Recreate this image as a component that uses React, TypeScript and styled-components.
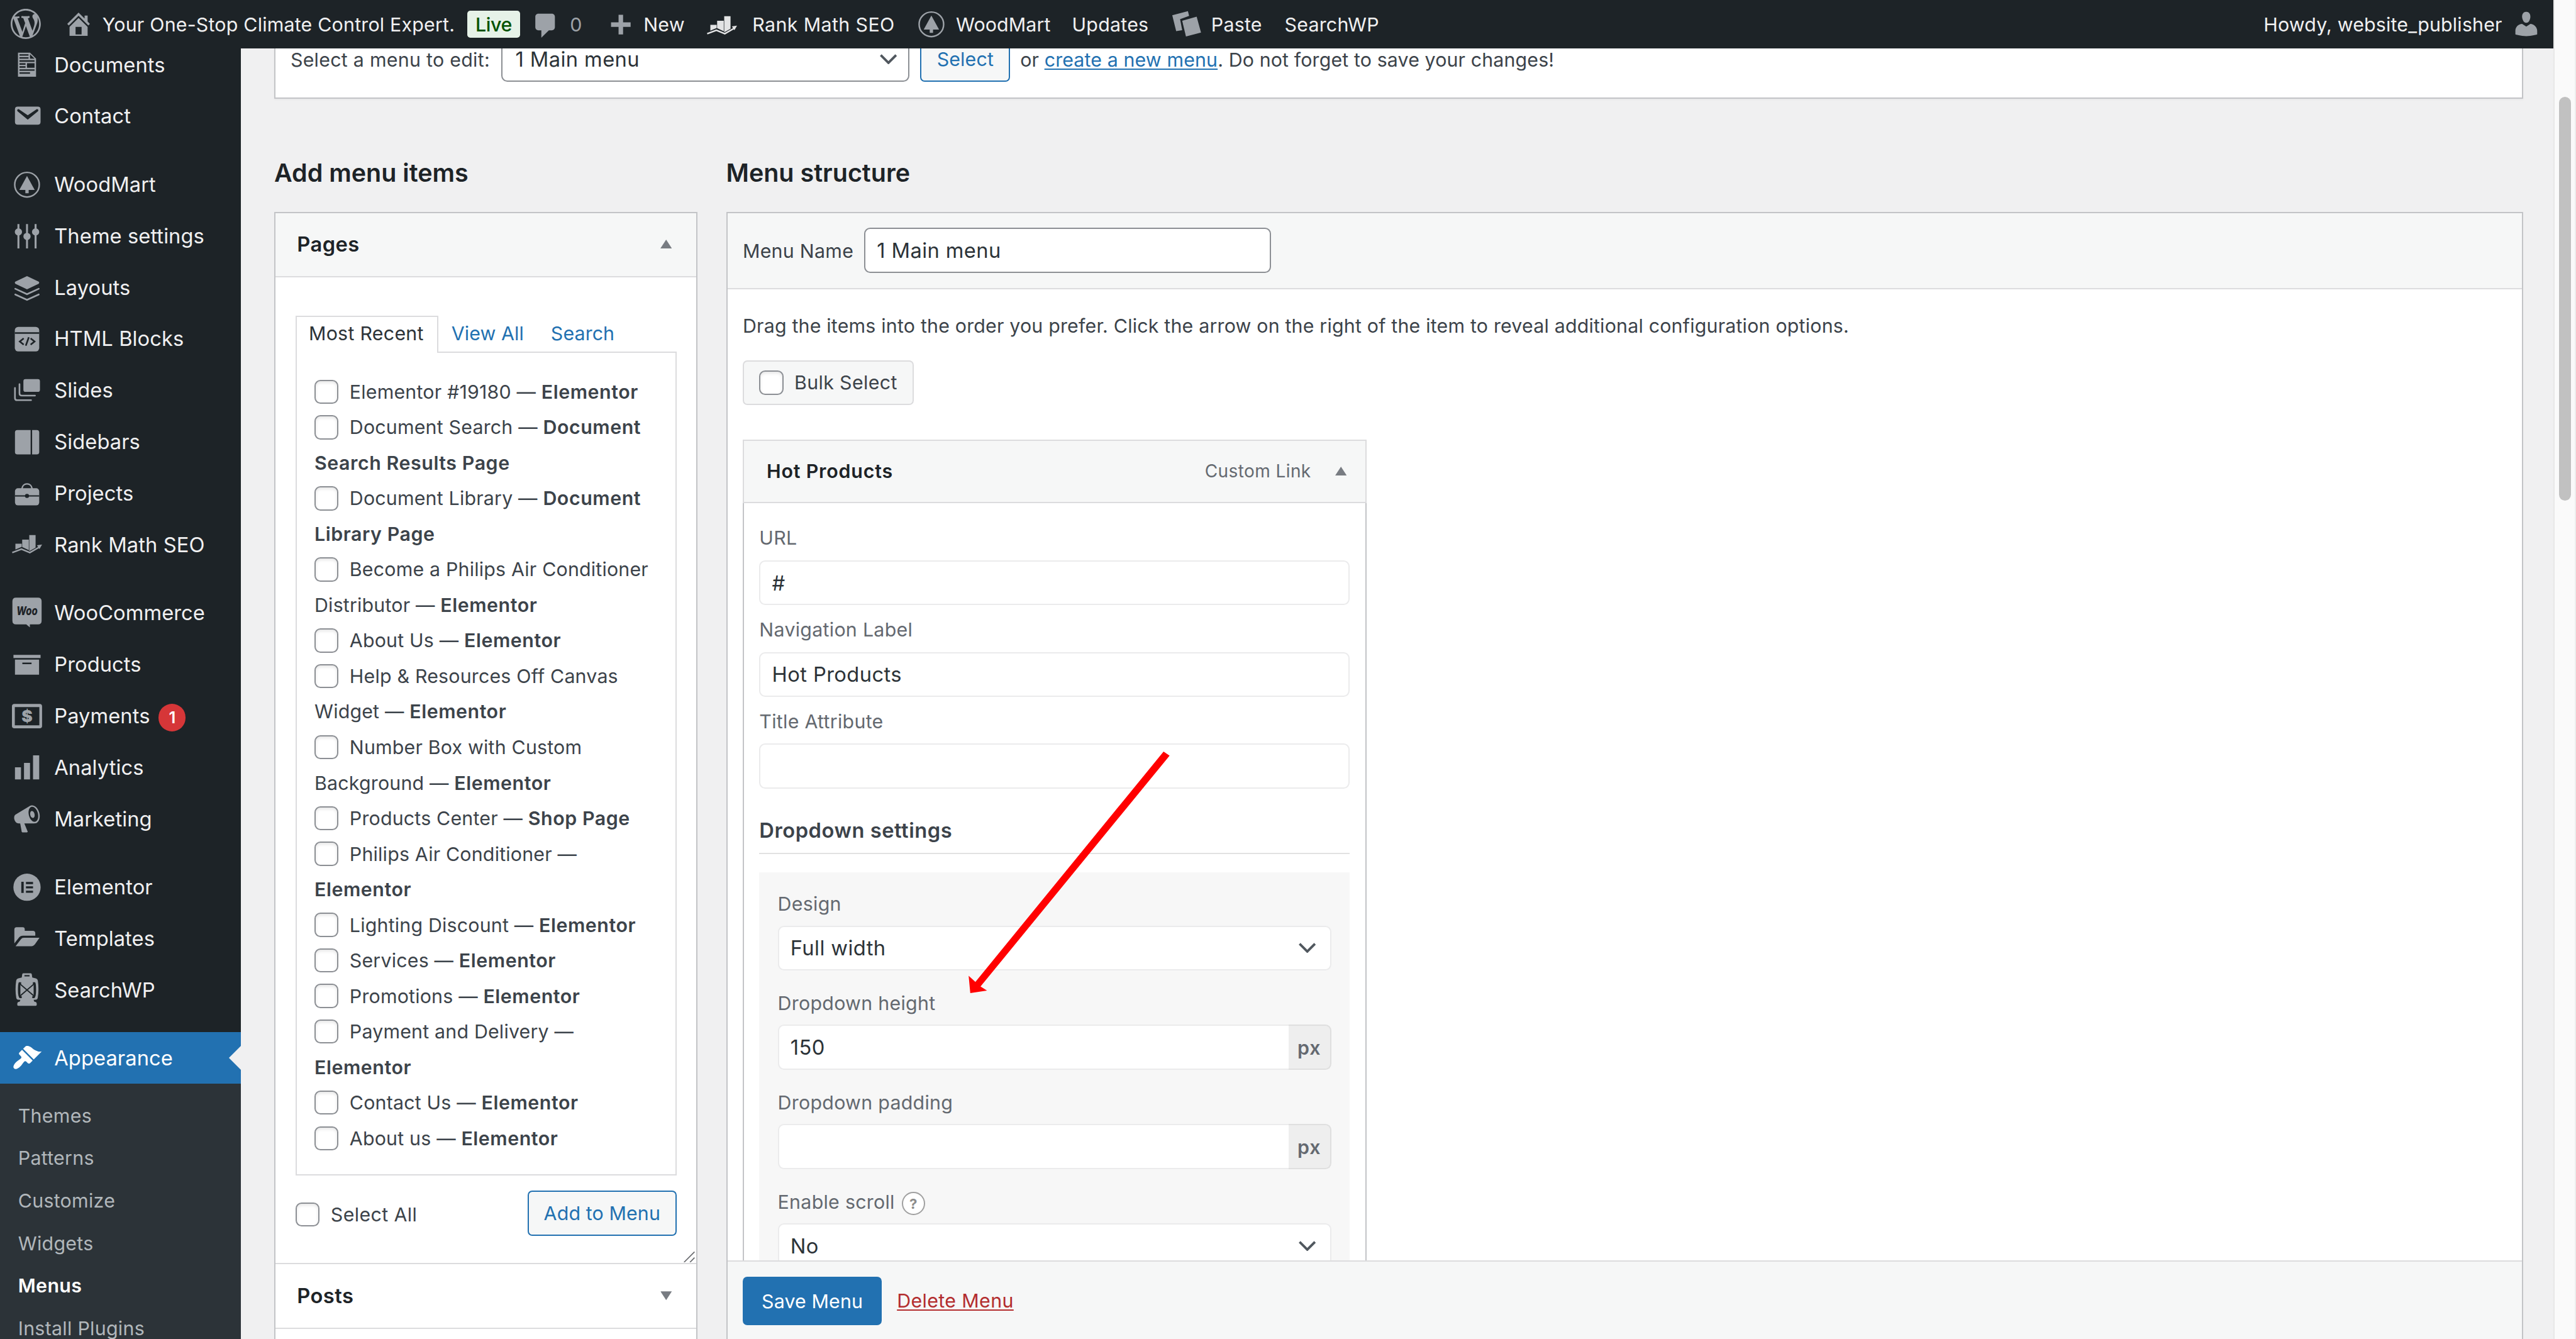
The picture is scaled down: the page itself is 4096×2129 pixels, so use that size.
import React from "react";
import styled, { createGlobalStyle, css } from "styled-components";

/* Every length is given in admin px and multiplied up to the display size. */
const K = 4096 / 1710;
const u = (n: number) => `${(n * K).toFixed(3)}px`;

const type = (size: number, weight = 400, tracking = 0.009) => css`
  font-size: ${u(size * 0.975)};
  font-weight: ${weight};
  letter-spacing: ${tracking}em;
`;

const GlobalStyle = createGlobalStyle`
  * { box-sizing: border-box; margin: 0; padding: 0; }
  html, body { overflow: hidden; }
  body {
    font-family: Inter, "Liberation Sans", sans-serif;
    background: #f0f0f1;
    color: #3c434a;
    white-space: nowrap;
  }
`;

/* ---------- shell ---------- */

const Shell = styled.div`
  position: relative;
  display: flex;
  width: 4096px;
  height: 2129px;
  overflow: hidden;
  background: #f0f0f1;
`;

const Main = styled.div`
  display: flex;
  flex-direction: column;
  flex: 1;
  min-width: 0;
`;

const Body = styled.div`
  display: flex;
  flex: 1;
  min-height: 0;
`;

const ScrollTrack = styled.div`
  width: ${u(15)};
  flex: none;
  padding: ${u(64.4)} ${u(3)} 0 ${u(3)};
  background: #fafafa;
  border-left: ${u(1)} solid #e8e8e8;
  border-right: ${u(1)} solid #ededed;
`;

const ScrollThumb = styled.div`
  width: ${u(8)};
  height: ${u(268)};
  border-radius: ${u(4)};
  background: #c1c1c1;
`;

/* ---------- icons ---------- */

const Glyph = styled.svg`
  display: block;
  flex: none;
  width: ${u(20)};
  height: ${u(20)};
  fill: currentColor;
  overflow: visible;
`;

const DARK = "#1d2327";

type IconName =
  | "wordpress" | "home" | "comment" | "plus" | "rank" | "tree" | "pages" | "user"
  | "document" | "mail" | "sliders" | "layers" | "code" | "slides" | "sidebar" | "portfolio"
  | "woo" | "archive" | "money" | "chart" | "megaphone" | "elementor" | "folder" | "lantern" | "brush";

const shapes: Record<IconName, React.ReactNode> = {
  wordpress: (
    <path d="M20 10c0-5.51-4.49-10-10-10C4.48 0 0 4.49 0 10c0 5.52 4.48 10 10 10 5.51 0 10-4.48 10-10zM7.78 15.37L4.37 6.22c.55-.02 1.17-.08 1.17-.08.5-.06.44-1.13-.06-1.11 0 0-1.45.11-2.37.11-.18 0-.37 0-.58-.01C4.12 2.69 6.87 1.11 10 1.11c2.33 0 4.45.87 6.05 2.34-.68-.11-1.65.39-1.65 1.58 0 .74.45 1.36.9 2.1.35.61.55 1.36.55 2.46 0 1.49-1.4 5-1.4 5l-3.03-8.37c.54-.02.82-.17.82-.17.5-.05.44-1.25-.06-1.22 0 0-1.44.12-2.38.12-.87 0-2.33-.12-2.33-.12-.5-.03-.56 1.2-.06 1.22l.92.08 1.26 3.41zM17.41 10c.24-.64.74-1.87.43-4.25.7 1.29 1.05 2.71 1.05 4.25 0 3.29-1.73 6.24-4.4 7.78.97-2.59 1.94-5.2 2.92-7.78zM6.1 18.09C3.12 16.65 1.11 13.53 1.11 10c0-1.3.23-2.48.72-3.59C3.25 10.3 4.67 14.2 6.1 18.09zm4.03-6.63l2.58 6.98c-.86.29-1.76.45-2.71.45-.79 0-1.57-.11-2.29-.33.81-2.38 1.62-4.74 2.42-7.1z" />
  ),
  home: <path d="M16 8.5l1.53 1.53-1.06 1.06L10 4.6l-6.47 6.49-1.06-1.06L10 2.5l4 4v-2h2v4zm-6-2.46l6 5.99V18H4v-5.97zM12 17v-5H8v5h4z" />,
  comment: <path d="M5 2h9c1.1 0 2 .9 2 2v7c0 1.1-.9 2-2 2h-2l-5 5v-5H5c-1.1 0-2-.9-2-2V4c0-1.1.9-2 2-2z" />,
  plus: <path d="M17 9v3h-5v5H9v-5H4V9h5V4h3v5h5z" />,
  rank: (
    <>
      <path d="M2.3 9.4h4.2v2.1L2.3 13.3z" />
      <path d="M6.8 6.7h4.4v7L6.8 11.6z" />
      <path d="M11.5 3.7h4.2v8.3l-3.9 2.2h-.3z" />
      <path d="M.2 15.3L6.3 13l5.6 2.3 6.2-3.6" fill="none" stroke="currentColor" strokeWidth="1" />
      <path d="M16.6 10.4L20 9.9l-1.7 3z" />
    </>
  ),
  tree: (
    <>
      <circle cx="10" cy="10.3" r="8.15" fill="none" stroke="currentColor" strokeWidth="1" />
      <path d="M10 4.5l5.1 9.3h-4v2.2H8.9v-2.2h-4z" />
    </>
  ),
  pages: (
    <>
      <path d="M.4 4.3L10.8 1.6l.8 3.1-6 2.2 1.4 7.3L3 14.8z" />
      <path d="M7 7.9L16.6 5.2 19.5 15.8 9.5 18.4z" />
    </>
  ),
  user: (
    <path d="M10 9.25c-2.27 0-2.73-3.44-2.73-3.44C7 4.02 7.82 2 9.97 2c2.16 0 2.98 2.02 2.71 3.81 0 0-.41 3.44-2.68 3.44zm0 2.57L12.72 10c2.39 0 4.52 2.33 4.52 4.53v2.49s-3.65 1.13-7.24 1.13c-3.65 0-7.24-1.13-7.24-1.13v-2.49c0-2.25 1.94-4.48 4.47-4.48z" />
  ),
  document: (
    <path d="M12 2l4 4v12H4V2h8zM5 3v1h6V3H5zm7 3h3l-3-3v3zM5 5v1h6V5H5zm10 3V7H5v1h10zM5 9v1h4V9H5zm10 3V9h-5v3h5zM5 11v1h4v-1H5zm10 3v-1H5v1h10zm-3 2v-1H5v1h7z" />
  ),
  mail: (
    <path d="M3.87 4h13.25C18.37 4 19 4.59 19 5.79v8.42c0 1.19-.63 1.79-1.88 1.79H3.87c-1.25 0-1.88-.6-1.88-1.79V5.79c0-1.2.63-1.79 1.88-1.79zm6.62 8.6l6.74-5.53c.24-.2.43-.66.13-1.07-.29-.41-.82-.42-1.17-.17l-5.7 3.86L4.8 5.83c-.35-.25-.88-.24-1.17.17-.3.41-.11.87.13 1.07z" />
  ),
  sliders: (
    <>
      <path d="M4.3 2.2v16.2M10 2.2v16.2M15.7 2.2v16.2" stroke="currentColor" strokeWidth="1.3" />
      <circle cx="4.3" cy="7.4" r="2.4" />
      <circle cx="10" cy="10.4" r="2.4" />
      <circle cx="15.7" cy="7.4" r="2.4" />
    </>
  ),
  layers: (
    <>
      <path d="M10 2.5l7.7 3.7q.8.7 0 1.4L10 11.3 2.3 7.6q-.8-.7 0-1.4z" />
      <path d="M2.2 10.9L10 14.5l7.8-3.6M2.2 14.7L10 18.3l7.8-3.6" fill="none" stroke="currentColor" strokeWidth="1.1" strokeLinecap="round" />
    </>
  ),
  code: (
    <>
      <rect x="1.9" y="2.4" width="16.2" height="16.3" rx="2.3" />
      <path d="M1.9 6.5h16.2" stroke={DARK} strokeWidth="1" />
      <path d="M7.8 10L5.2 12.1l2.6 2.1M12.4 10l2.6 2.1-2.6 2.1M11.2 9.3l-2 5.6" fill="none" stroke={DARK} strokeWidth="1.1" />
    </>
  ),
  slides: (
    <>
      <rect x="7.6" y="2.8" width="11" height="8.5" rx="1.4" />
      <path d="M5 6.2v6q0 1.6 1.6 1.6h8.7M2 8.7v6.7q0 1.4 1.4 1.4h9.3" fill="none" stroke="currentColor" strokeWidth="1.1" strokeLinecap="round" />
    </>
  ),
  sidebar: (
    <>
      <path d="M3.6 2.4h8.8v16.2H3.6q-1.6 0-1.6-1.6V4q0-1.6 1.6-1.6z" />
      <path d="M13.4 2.4h3.1q1.6 0 1.6 1.6v13q0 1.6-1.6 1.6h-3.1z" />
    </>
  ),
  portfolio: (
    <>
      <path d="M6.6 7.2C7.1 2.8 12.9 2.8 13.4 7.2" fill="none" stroke="currentColor" strokeWidth="1" />
      <rect x="2" y="6.8" width="16.1" height="11.4" rx="2" />
      <path d="M2 11.9h16.1" stroke={DARK} strokeWidth=".9" />
      <circle cx="10" cy="11.9" r="1.35" fill={DARK} />
    </>
  ),
  woo: (
    <>
      <path d="M2.7.1h14.6q2.4 0 2.4 2.4v13q0 2.4-2.4 2.4h-5.4v1.9l-2.4-1.9H2.7Q.3 17.9.3 15.5v-13Q.3.1 2.7.1z" />
      <text x="10" y="11.8" fontSize="8" fontWeight="800" fontStyle="italic" textAnchor="middle" textLength="14" lengthAdjust="spacingAndGlyphs" fill={DARK}>Woo</text>
    </>
  ),
  archive: (
    <>
      <path d="M1 3.9h18v2H1z" />
      <path d="M2 7h16v10H2zM6.9 9v1H13V9z" fillRule="evenodd" />
    </>
  ),
  money: (
    <>
      <path d="M1.6 2.2h16.8q1.6 0 1.6 1.6v13q0 1.6-1.6 1.6H1.6Q0 18.4 0 16.8v-13q0-1.6 1.6-1.6zM1.9 4.3v12.1h16.3V4.3z" fillRule="evenodd" />
      <text x="10" y="14.4" fontSize="11" fontWeight="900" textAnchor="middle">$</text>
    </>
  ),
  chart: <path d="M2 10h4v8.1H2zM8 7.1h4v11H8zM14 2.1h4.1v16H14z" />,
  megaphone: (
    <path d="M18.15 5.94c.46 1.62.38 3.22-.02 4.48-.42 1.28-1.26 2.18-2.3 2.48-.16.06-.26.06-.4.06-.06.02-.12.02-.18.02-.06.02-.14.02-.22.02h-6.8l2.22 5.5c.02.14-.06.26-.14.34-.08.1-.24.16-.34.16H6.95c-.1 0-.26-.06-.34-.16-.08-.08-.16-.2-.14-.34l-1-5.5H4.25l-.02-.02c-.5.06-1.08-.18-1.54-.62s-.88-1.08-1.06-1.88c-.24-.8-.2-1.56-.02-2.2.18-.62.58-1.08 1.06-1.3l.02-.02 9-5.4c.1-.06.18-.1.24-.16.06-.04.14-.08.24-.12.16-.08.28-.12.5-.18 1.04-.3 2.24.1 3.22.98s1.84 2.24 2.26 3.86zm-2.58 5.98h-.02c.4-.1.74-.34 1.04-.7.58-.7.86-1.76.86-3.04 0-.64-.1-1.3-.28-1.98-.34-1.36-1.02-2.5-1.78-3.24s-1.68-1.1-2.46-.88c-.82.22-1.4.96-1.7 2-.32 1.04-.28 2.36.06 3.72.38 1.36 1 2.5 1.8 3.24.78.74 1.62 1.1 2.48.88zm-2.54-7.08c.22-.04.42-.02.62.04.38.16.76.48 1.02 1s.42 1.2.42 1.78c0 .3-.04.56-.12.8-.18.48-.44.84-.86.94-.34.1-.8-.06-1.14-.4s-.64-.86-.78-1.5c-.18-.62-.12-1.24.02-1.72s.48-.84.82-.94z" />
  ),
  elementor: (
    <>
      <circle cx="10" cy="10.3" r="9.05" />
      <path d="M6.2 6.7h1.6v7.4H6.2zM9.3 6.8H14v1.4H9.3zM9.3 9.7H14v1.4H9.3zM9.3 12.6H14V14H9.3z" fill={DARK} />
    </>
  ),
  folder: (
    <>
      <path d="M1.6 13.4V4.1q0-1.5 1.5-1.5h4q1.4 0 1.4 1.4v1h5.4q1.6 0 1.6 1.6v1.7H7.2q-1.4 0-2.3.9z" />
      <path d="M2.4 15.2l3.6-4.7q.7-.9 1.9-.9h10.4l-3 4.3q-.9 1.3-2.4 1.3z" />
    </>
  ),
  lantern: (
    <>
      <path d="M7.500-1h5q.6 0 .7.8l.3 2 2.500.6q1 .3 1.200 1.500.9 6-.1 11.600-.2 1-1.100 1l-1.600.1.4 1.200 1.100.3q.6.4.6 1.400 0 1.100-.7 1.100H4.200q-.7 0-.7-1.100 0-1 .6-1.400l1.100-.3.4-1.200-1.600-.1q-.9 0-1.100-1-1-5.600-.1-11.600.2-1.200 1.200-1.500l2.500-.6.3-2q.1-.8.7-.8z" />
      <path d="M8.300.6h3.400" stroke={DARK} strokeWidth=".9" />
      <path d="M4.600 4.900h1.500v1.300h-.5v8h.9v1.200H5.200Q4 14.800 4 10.200t.6-5.300zM15.400 4.900h-1.500v1.300h.5v8h-.9v1.200h1.300Q16 14.800 16 10.200t-.6-5.300z" fill={DARK} />
      <path d="M5.300 6l9.400 8.100M14.700 6l-9.400 8.100" stroke={DARK} strokeWidth=".8" />
    </>
  ),
  brush: (
    <path d="M14.480 11.060L7.410 3.990l1.500-1.500c.5-.56 2.300-.47 3.510.32 1.210.8 1.430 1.280 2.910 2.100 1.180.64 2.450 1.260 4.450.85zm-.71.71L6.700 4.700 4.930 6.470c-.39.39-.39 1.020 0 1.410l1.060 1.060c.39.39.39 1.030 0 1.420-.6.6-1.430 1.110-2.210 1.690-.35.26-.7.53-1.010.84C1.430 14.230.4 16.080 1.400 17.070c.99 1 2.840-.03 4.180-1.360.31-.31.58-.66.85-1.020.57-.78 1.080-1.610 1.690-2.210.39-.39 1.020-.39 1.410 0l1.060 1.060c.39.39 1.020.39 1.410 0z" />
  ),
};

const Icon = ({ name }: { name: IconName }) => <Glyph viewBox="0 0 20 20">{shapes[name]}</Glyph>;

const Arrowhead = styled.svg`
  display: block;
  flex: none;
  width: ${u(11.4)};
  height: ${u(6.8)};
  fill: none;
  stroke: #50575e;
`;
const Chevron = () => (
  <Arrowhead viewBox="0 0 11.4 6.8"><path d="M.6.7l5.1 5.100L10.800.7" strokeWidth="1.600" /></Arrowhead>
);

const Triangle = styled.svg<{ $down?: boolean }>`
  display: block;
  flex: none;
  width: ${u(7.7)};
  height: ${u(5.9)};
  fill: #787c82;
  transform: ${(p) => (p.$down ? "rotate(180deg)" : "none")};
`;
const Toggle = ({ down }: { down?: boolean }) => (
  <Triangle $down={down} viewBox="0 0 10 8" preserveAspectRatio="none"><path d="M5 0l5 8H0z" /></Triangle>
);

/* ---------- admin bar ---------- */

const Bar = styled.header`
  position: relative;
  z-index: 2;
  display: flex;
  flex: none;
  height: ${u(32)};
  background: #1d2327;
  color: #f0f0f1;
`;

const BarItem = styled.div<{ $w?: number; $gap?: number }>`
  display: flex;
  flex: none;
  align-items: flex-start;
  gap: ${(p) => u(p.$gap ?? 6)};
  width: ${(p) => (p.$w ? u(p.$w) : "auto")};
  padding-left: ${u(7)};
`;

const BarIcon = styled.span<{ $top?: number; $bright?: boolean }>`
  padding-top: ${(p) => u(p.$top ?? 6)};
  color: ${(p) => (p.$bright ? "#e3e4e5" : "#9da2a8")};
`;

const BarText = styled.span<{ $dim?: boolean; $tracking?: number }>`
  ${(p) => type(13, 400, p.$tracking ?? 0.008)}
  line-height: ${u(33)};
  color: ${(p) => (p.$dim ? "#9da2a8" : "inherit")};
`;

const LiveBadge = styled.span`
  ${type(13, 500, -0.012)}
  margin: ${u(6.9)} 0 0 ${u(2.2)};
  width: ${u(35.6)};
  height: ${u(18.2)};
  line-height: ${u(18.6)};
  text-align: center;
  border-radius: ${u(2)};
  background: #e6f2e8;
  color: #005200;
`;

const Account = styled(BarItem)`
  margin-left: auto;
  padding-right: ${u(8)};
`;

/* ---------- sidebar ---------- */

const Sidebar = styled.nav`
  width: ${u(160)};
  flex: none;
  overflow: hidden;
  background: #1d2327;
`;

const SidebarScroll = styled.div`
  margin-top: ${u(-6.2)};
`;

const NavRow = styled.div<{ $current?: boolean }>`
  position: relative;
  display: flex;
  align-items: flex-start;
  height: ${u(34.2)};
  padding: ${u(7)} 0 0 ${u(8)};
  gap: ${u(8)};
  background: ${(p) => (p.$current ? "#2271b1" : "transparent")};
  color: ${(p) => (p.$current ? "#fff" : "#9da2a8")};
`;

const NavLabel = styled.span<{ $current?: boolean }>`
  ${type(14, 400, 0.002)}
  line-height: ${u(20.6)};
  color: ${(p) => (p.$current ? "#fff" : "#f0f0f1")};
`;

const Separator = styled.div`
  height: ${u(11)};
`;

const Bubble = styled.span`
  ${type(11, 600, 0)}
  margin: ${u(2.2)} 0 0 ${u(-2.2)};
  width: ${u(18)};
  height: ${u(18)};
  line-height: ${u(18)};
  border-radius: 50%;
  text-align: center;
  background: #d63638;
  color: #fff;
`;

const CurrentNotch = styled.span`
  position: absolute;
  right: 0;
  top: ${u(9)};
  border-style: solid;
  border-width: ${u(8)} ${u(8)} ${u(8)} 0;
  border-color: transparent #f0f0f1 transparent transparent;
`;

const Submenu = styled.div`
  padding: ${u(7.3)} 0 ${u(20)} ${u(12)};
  background: #2c3338;
`;

const SubLink = styled.div<{ $active?: boolean }>`
  ${(p) => type(13, p.$active ? 600 : 400, p.$active ? 0.012 : 0.009)}
  height: ${u(28.2)};
  line-height: ${u(28.2)};
  color: ${(p) => (p.$active ? "#fff" : "#b1b7bb")};
`;

/* ---------- shared controls ---------- */

const Page = styled.main`
  flex: 1;
  min-width: 0;
  padding: 0 ${u(20)} 0 ${u(22)};
  overflow: hidden;
`;

const Checkbox = styled.span`
  flex: none;
  width: ${u(16)};
  height: ${u(16)};
  border: ${u(1)} solid #8c8f94;
  border-radius: ${u(4)};
  background: #fff;
  box-shadow: inset 0 ${u(1)} ${u(2)} rgba(0, 0, 0, 0.1);
`;

const Input = styled.div<{ $w?: number; $soft?: boolean }>`
  ${type(14, 400, 0.012)}
  display: flex;
  align-items: center;
  justify-content: space-between;
  width: ${(p) => (p.$w ? u(p.$w) : "auto")};
  height: ${u(29.8)};
  padding-left: ${u(7.6)};
  border: ${u(1)} solid ${(p) => (p.$soft ? "#ebebec" : "#8c8f94")};
  border-radius: ${u(4)};
  background: #fff;
  color: #2c3338;
`;

const Select = styled(Input)`
  padding-right: ${(p) => u(p.$soft ? 9.4 : 7.3)};
  padding-left: ${(p) => u(p.$soft ? 7.6 : 8.6)};
`;

const Button = styled.div<{ $w: number; $primary?: boolean }>`
  ${(p) => type(13, 400, p.$primary ? 0.005 : 0.004)}
  display: flex;
  align-items: center;
  justify-content: center;
  flex: none;
  width: ${(p) => u(p.$w)};
  height: ${(p) => u(p.$primary ? 32 : 30)};
  border: ${u(1)} solid #2271b1;
  border-radius: ${u(3)};
  background: ${(p) => (p.$primary ? "#2271b1" : "#f6f7f7")};
  color: ${(p) => (p.$primary ? "#fff" : "#2271b1")};
`;

/* ---------- menu chooser ---------- */

const Chooser = styled.section`
  display: flow-root;
  height: ${u(33.4)};
  padding-left: ${u(10)};
  border: ${u(1)} solid #c3c4c7;
  border-top: 0;
  background: #fff;
  box-shadow: 0 ${u(1)} ${u(1)} rgba(0, 0, 0, 0.04);
`;

const ChooserRow = styled.div`
  ${type(13)}
  display: flex;
  align-items: center;
  height: ${u(30)};
  margin-top: ${u(-7.7)};
`;

const ChooserLabel = styled.span`
  width: ${u(139.9)};
  padding-top: ${u(1)};
`;

const ChooserHint = styled.span`
  ${type(13, 400, 0.004)}
  padding: ${u(1)} 0 0 ${u(6.6)};
`;

const Link = styled.a<{ $danger?: boolean }>`
  color: ${(p) => (p.$danger ? "#b32d2e" : "#2271b1")};
  text-decoration: underline;
  text-decoration-thickness: ${u(1)};
  text-underline-offset: ${u(1.4)};
`;

const Spacer = styled.span<{ $w: number }>`
  flex: none;
  width: ${(p) => u(p.$w)};
`;

/* ---------- columns ---------- */

const Columns = styled.div`
  display: grid;
  grid-template-columns: ${u(281)} 1fr;
  column-gap: ${u(19)};
  margin-top: ${u(37.8)};
`;

const Heading = styled.h2`
  ${type(16.9, 600, 0)}
  line-height: ${u(23.7)};
  margin-bottom: ${u(13.6)};
  color: #1d2327;
`;

const Accordion = styled.div`
  height: ${u(760)};
  border: ${u(1)} solid #c3c4c7;
  background: #fff;
`;

const AccordionHead = styled.div<{ $open?: boolean }>`
  ${type(14, 600, 0.014)}
  display: flex;
  align-items: center;
  justify-content: space-between;
  height: ${u(43)};
  padding: 0 ${u(16.3)} ${u(0.8)} ${u(14.3)};
  border-bottom: ${u(1)} solid #dcdcde;
  background: ${(p) => (p.$open ? "#f6f7f7" : "#fff")};
  color: #1d2327;
`;

const AccordionBody = styled.div`
  position: relative;
  height: ${u(654.9)};
  padding: ${u(25.4)} ${u(13.1)} 0 ${u(13.3)};
  border-bottom: ${u(1)} solid #dcdcde;
`;

const Tabs = styled.div`
  position: relative;
  z-index: 1;
  display: flex;
  height: ${u(24.5)};
  margin-bottom: ${u(-1)};
`;

const Tab = styled.div<{ $active?: boolean; $w?: number }>`
  ${(p) => type(13, 400, p.$active ? 0.009 : 0.003)}
  width: ${(p) => (p.$w ? u(p.$w) : "auto")};
  padding-left: ${(p) => u(p.$active ? 8 : 8)};
  line-height: ${u(22.4)};
  border: ${u(1)} solid ${(p) => (p.$active ? "#dcdcde" : "transparent")};
  border-bottom: 0;
  background: ${(p) => (p.$active ? "#fff" : "transparent")};
  color: ${(p) => (p.$active ? "#2c3338" : "#2271b1")};
`;

const PageList = styled.div`
  height: ${u(547)};
  padding: ${u(14.2)} 0 0 ${u(11.8)};
  border: ${u(1)} solid #dcdcde;
`;

const PageLine = styled.div`
  ${type(13, 400, 0.006)}
  display: flex;
  align-items: center;
  gap: ${u(7.3)};
  height: ${u(23.595)};

  b {
    font-weight: 600;
    letter-spacing: 0.018em;
  }
`;

const ListActions = styled.div`
  display: flex;
  justify-content: space-between;
  align-items: center;
  margin-top: ${u(10.1)};
`;

const CheckLabel = styled.label`
  ${type(13, 400, 0.012)}
  display: flex;
  align-items: center;
  gap: ${u(7.4)};
  padding-top: ${u(2)};
`;

const ResizeGrip = styled.svg`
  position: absolute;
  right: ${u(1)};
  bottom: ${u(0.3)};
  width: ${u(7.4)};
  height: ${u(7.4)};
  stroke: #6a6c70;
  fill: none;
`;

/* ---------- menu editor ---------- */

const Editor = styled.div`
  display: flex;
  flex-direction: column;
  height: ${u(749.9)};
  border: ${u(1)} solid #c3c4c7;
  border-bottom: 0;
  background: #fff;
`;

const EditorHead = styled.div`
  ${type(13)}
  display: flex;
  align-items: center;
  flex: none;
  height: ${u(50.7)};
  padding: 0 0 ${u(0.2)} ${u(10.2)};
  border-bottom: ${u(1)} solid #dcdcde;
  background: #f6f7f7;
`;

const NameLabel = styled.span`
  width: ${u(80.6)};
  padding-top: ${u(0.6)};
`;

const EditorBody = styled.div`
  flex: 1;
  min-height: 0;
  overflow: hidden;
  padding: ${u(14.8)} ${u(10)} 0 ${u(10.2)};
`;

const Instructions = styled.p`
  ${type(13, 400, 0.0062)}
  line-height: ${u(19.5)};
`;

const BulkSelect = styled.div`
  ${type(13, 400, 0.012)}
  display: flex;
  align-items: center;
  gap: ${u(7.2)};
  width: ${u(113.4)};
  height: ${u(29.8)};
  margin-top: ${u(12.8)};
  padding-left: ${u(10.2)};
  border: ${u(1)} solid #dcdcde;
  border-radius: ${u(3)};
  background: #f6f7f7;
`;

const MenuItem = styled.article`
  width: ${u(414)};
  margin-top: ${u(22.8)};
`;

const MenuItemHead = styled.div`
  display: flex;
  align-items: center;
  height: ${u(42.3)};
  padding: 0 ${u(12.2)} 0 ${u(15.1)};
  border: ${u(1)} solid #dcdcde;
  background: #f6f7f7;
`;

const MenuItemTitle = styled.span`
  ${type(13, 600, 0.026)}
  flex: 1;
  color: #1d2327;
`;

const MenuItemKind = styled.span`
  ${type(12, 400, 0.0145)}
  margin-right: ${u(16)};
  color: #646970;
`;

const Settings = styled.div`
  height: ${u(600)};
  padding: ${u(13.4)} ${u(10.2)} 0;
  border: solid #c3c4c7;
  border-width: 0 ${u(1)};
`;

const Field = styled.div<{ $compact?: boolean }>`
  margin-bottom: ${(p) => u(p.$compact ? 11.9 : 6.4)};
`;

const FieldLabel = styled.div<{ $compact?: boolean }>`
  ${type(13, 400, 0.009)}
  display: flex;
  align-items: center;
  height: ${u(19.5)};
  margin-bottom: ${(p) => u(p.$compact ? 4.7 : 5.1)};
  color: #646970;
`;

const SectionTitle = styled.h4`
  ${type(14, 600, 0.016)}
  line-height: ${u(20)};
  margin: ${u(18.3)} 0 ${u(12.1)};
  padding-bottom: ${u(4.3)};
  border-bottom: ${u(1)} solid #e2e2e2;
  color: #3c434a;
`;

const DropdownBox = styled.div`
  height: ${u(320)};
  padding: ${u(11.3)} ${u(12.2)} 0;
  background: #f7f7f7;
`;

const UnitInput = styled.div`
  display: grid;
  grid-template-columns: 1fr ${u(28.5)};

  > :first-child {
    border-right: 0;
    border-radius: ${u(4)} 0 0 ${u(4)};
  }
`;

const Unit = styled.span`
  ${type(13, 600, 0.03)}
  display: flex;
  align-items: center;
  justify-content: center;
  border: ${u(1)} solid #dfdfdf;
  border-left: 0;
  border-radius: 0 ${u(4)} ${u(4)} 0;
  padding-top: ${u(1)};
  background: #eee;
  color: #646970;
`;

const Help = styled.span`
  ${type(9.5, 700, 0)}
  display: flex;
  align-items: center;
  justify-content: center;
  width: ${u(15.4)};
  height: ${u(15.4)};
  margin: ${u(2.6)} 0 0 ${u(4.6)};
  border: ${u(1)} solid #a0a0a0;
  border-radius: 50%;
  background: #fff;
  color: #8c8c8c;
`;

const EditorFoot = styled.div`
  display: flex;
  flex: none;
  gap: ${u(10)};
  height: ${u(53.9)};
  padding: ${u(10.3)} ${u(10.2)} 0;
  border-top: ${u(1)} solid #dcdcde;
  background: #f6f7f7;
`;

const DeleteText = styled.span`
  ${type(13, 400, 0.012)}
  line-height: ${u(32.4)};
`;

const Annotation = styled.svg`
  position: absolute;
  inset: 0;
  width: 100%;
  height: 100%;
  z-index: 3;
  pointer-events: none;
`;

/* ---------- data ---------- */

type NavEntry = { icon: IconName; label: string; badge?: string } | null;

const nav: NavEntry[] = [
  { icon: "document", label: "Documents" },
  { icon: "mail", label: "Contact" },
  null,
  { icon: "tree", label: "WoodMart" },
  { icon: "sliders", label: "Theme settings" },
  { icon: "layers", label: "Layouts" },
  { icon: "code", label: "HTML Blocks" },
  { icon: "slides", label: "Slides" },
  { icon: "sidebar", label: "Sidebars" },
  { icon: "portfolio", label: "Projects" },
  { icon: "rank", label: "Rank Math SEO" },
  null,
  { icon: "woo", label: "WooCommerce" },
  { icon: "archive", label: "Products" },
  { icon: "money", label: "Payments", badge: "1" },
  { icon: "chart", label: "Analytics" },
  { icon: "megaphone", label: "Marketing" },
  null,
  { icon: "elementor", label: "Elementor" },
  { icon: "folder", label: "Templates" },
  { icon: "lantern", label: "SearchWP" },
  null,
];

const submenu = ["Themes", "Patterns", "Customize", "Widgets", "Menus", "Install Plugins"];

/* [has checkbox, regular text, bold text] for each printed line */
const lines: [boolean, string, string][] = [
  [true, "Elementor #19180 — ", "Elementor"],
  [true, "Document Search — ", "Document"],
  [false, "", "Search Results Page"],
  [true, "Document Library — ", "Document"],
  [false, "", "Library Page"],
  [true, "Become a Philips Air Conditioner", ""],
  [false, "Distributor — ", "Elementor"],
  [true, "About Us — ", "Elementor"],
  [true, "Help & Resources Off Canvas", ""],
  [false, "Widget — ", "Elementor"],
  [true, "Number Box with Custom", ""],
  [false, "Background — ", "Elementor"],
  [true, "Products Center — ", "Shop Page"],
  [true, "Philips Air Conditioner —", ""],
  [false, "", "Elementor"],
  [true, "Lighting Discount — ", "Elementor"],
  [true, "Services — ", "Elementor"],
  [true, "Promotions — ", "Elementor"],
  [true, "Payment and Delivery —", ""],
  [false, "", "Elementor"],
  [true, "Contact Us — ", "Elementor"],
  [true, "About us — ", "Elementor"],
];

/* ---------- sections ---------- */

const AdminBar = () => (
  <Bar>
    <BarItem $w={35}><BarIcon><Icon name="wordpress" /></BarIcon></BarItem>
    <BarItem $w={310.4}>
      <BarIcon><Icon name="home" /></BarIcon>
      <BarText $tracking={0.0065}>Your One-Stop Climate Control Expert.</BarText>
      <LiveBadge>Live</LiveBadge>
    </BarItem>
    <BarItem $w={49.1}><BarIcon $top={7}><Icon name="comment" /></BarIcon><BarText $dim>0</BarText></BarItem>
    <BarItem $w={67.9} $gap={5.7}><BarIcon><Icon name="plus" /></BarIcon><BarText>New</BarText></BarItem>
    <BarItem $w={138.7} $gap={10}><BarIcon $top={7.2} $bright><Icon name="rank" /></BarIcon><BarText $tracking={0.013}>Rank Math SEO</BarText></BarItem>
    <BarItem $w={103.5} $gap={6.5}><BarIcon $top={5.7}><Icon name="tree" /></BarIcon><BarText $tracking={0.003}>WoodMart</BarText></BarItem>
    <BarItem $w={66.2}><BarText>Updates</BarText></BarItem>
    <BarItem $w={74.9} $gap={6.2}><BarIcon><Icon name="pages" /></BarIcon><BarText>Paste</BarText></BarItem>
    <BarItem><BarText>SearchWP</BarText></BarItem>
    <Account><BarText $tracking={0.0055}>Howdy, website_publisher</BarText><BarIcon><Icon name="user" /></BarIcon></Account>
  </Bar>
);

const AdminMenu = () => (
  <Sidebar>
    <SidebarScroll>
      {nav.map((n, i) =>
        n ? (
          <NavRow key={i}>
            <Icon name={n.icon} />
            <NavLabel>{n.label}</NavLabel>
            {n.badge && <Bubble>{n.badge}</Bubble>}
          </NavRow>
        ) : (
          <Separator key={i} />
        )
      )}
      <NavRow $current>
        <Icon name="brush" />
        <NavLabel $current>Appearance</NavLabel>
        <CurrentNotch />
      </NavRow>
      <Submenu>
        {submenu.map((s) => <SubLink key={s} $active={s === "Menus"}>{s}</SubLink>)}
      </Submenu>
    </SidebarScroll>
  </Sidebar>
);

const AddItems = () => (
  <section>
    <Heading>Add menu items</Heading>
    <Accordion>
      <AccordionHead $open>Pages<Toggle /></AccordionHead>
      <AccordionBody>
        <Tabs>
          <Tab $active $w={94.7}>Most Recent</Tab>
          <Tab $w={66}>View All</Tab>
          <Tab>Search</Tab>
        </Tabs>
        <PageList>
          {lines.map(([box, text, bold], i) => (
            <PageLine key={i}>
              {box && <Checkbox />}
              <span>{text}{bold && <b>{bold}</b>}</span>
            </PageLine>
          ))}
        </PageList>
        <ListActions>
          <CheckLabel><Checkbox />Select All</CheckLabel>
          <Button $w={98.8}>Add to Menu</Button>
        </ListActions>
        <ResizeGrip viewBox="0 0 10 10"><path d="M.4 9.6L9.800.2M5.7 9.6L9.800 5.5" strokeWidth="1" /></ResizeGrip>
      </AccordionBody>
      <AccordionHead>Posts<Toggle down /></AccordionHead>
    </Accordion>
  </section>
);

const MenuStructure = () => (
  <section>
    <Heading>Menu structure</Heading>
    <Editor>
      <EditorHead>
        <NameLabel>Menu Name</NameLabel>
        <Input $w={270}>1 Main menu</Input>
      </EditorHead>
      <EditorBody>
        <Instructions>
          Drag the items into the order you prefer. Click the arrow on the right of the item to reveal additional configuration options.
        </Instructions>
        <BulkSelect><Checkbox />Bulk Select</BulkSelect>
        <MenuItem>
          <MenuItemHead>
            <MenuItemTitle>Hot Products</MenuItemTitle>
            <MenuItemKind>Custom Link</MenuItemKind>
            <Toggle />
          </MenuItemHead>
          <Settings>
            <Field><FieldLabel>URL</FieldLabel><Input $soft>#</Input></Field>
            <Field><FieldLabel>Navigation Label</FieldLabel><Input $soft>Hot Products</Input></Field>
            <Field><FieldLabel>Title Attribute</FieldLabel><Input $soft /></Field>
            <SectionTitle>Dropdown settings</SectionTitle>
            <DropdownBox>
              <Field $compact>
                <FieldLabel $compact>Design</FieldLabel>
                <Select $soft>Full width<Chevron /></Select>
              </Field>
              <Field $compact>
                <FieldLabel $compact>Dropdown height</FieldLabel>
                <UnitInput><Input $soft>150</Input><Unit>px</Unit></UnitInput>
              </Field>
              <Field $compact>
                <FieldLabel $compact>Dropdown padding</FieldLabel>
                <UnitInput><Input $soft /><Unit>px</Unit></UnitInput>
              </Field>
              <Field $compact>
                <FieldLabel $compact>Enable scroll<Help>?</Help></FieldLabel>
                <Select $soft>No<Chevron /></Select>
              </Field>
            </DropdownBox>
          </Settings>
        </MenuItem>
      </EditorBody>
      <EditorFoot>
        <Button $primary $w={92.4}>Save Menu</Button>
        <DeleteText><Link $danger>Delete Menu</Link></DeleteText>
      </EditorFoot>
    </Editor>
  </section>
);

export default function App() {
  return (
    <>
      <GlobalStyle />
      <Shell>
        <Main>
          <AdminBar />
          <Body>
            <AdminMenu />
            <Page>
              <Chooser>
                <ChooserRow>
                  <ChooserLabel>Select a menu to edit:</ChooserLabel>
                  <Select $w={270.8}>1 Main menu<Chevron /></Select>
                  <Spacer $w={7.4} />
                  <Button $w={59.7}>Select</Button>
                  <ChooserHint>or <Link>create a new menu</Link>. Do not forget to save your changes!</ChooserHint>
                </ChooserRow>
              </Chooser>
              <Columns>
                <AddItems />
                <MenuStructure />
              </Columns>
            </Page>
          </Body>
        </Main>
        <ScrollTrack><ScrollThumb /></ScrollTrack>
        <Annotation viewBox="0 0 1710 889" preserveAspectRatio="none">
          <path fill="#f00" d="M772.4 499L776.4 501.7 650.9 655 655.2 657.7 644.1 659.3 643 647.9 647.5 651.9z" />
        </Annotation>
      </Shell>
    </>
  );
}
